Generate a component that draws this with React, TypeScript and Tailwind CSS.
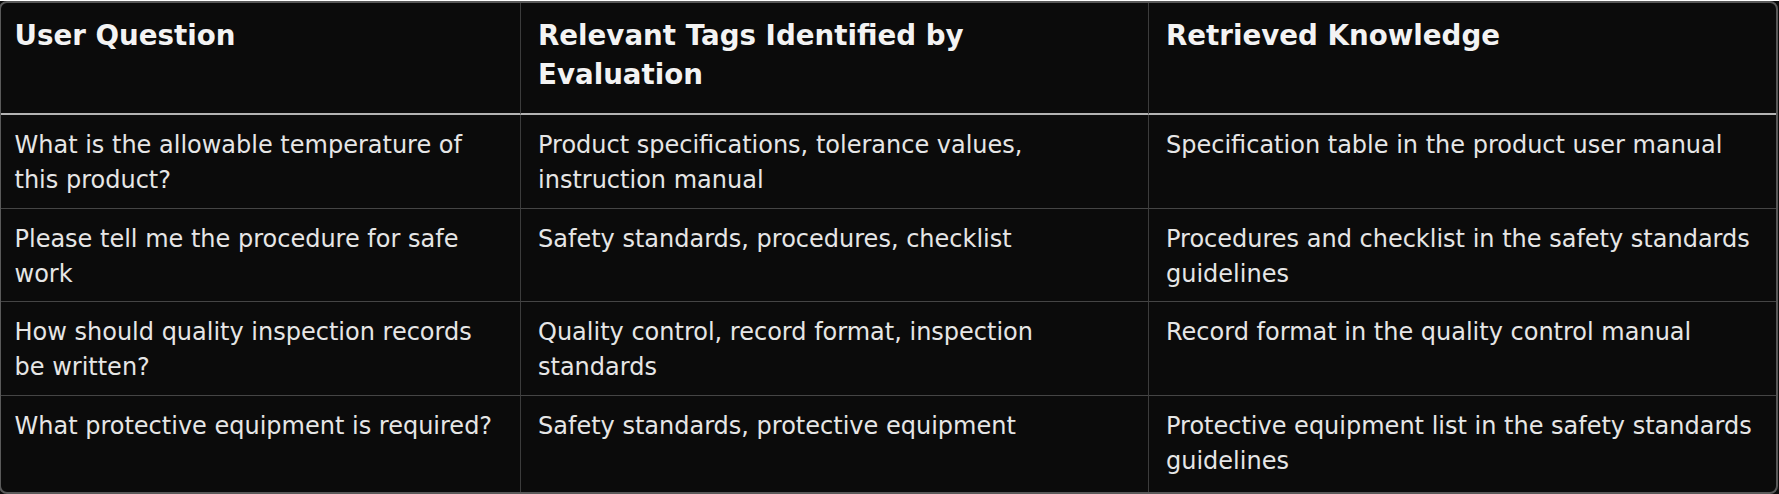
const rows = [
  {
    question: 'What is the allowable temperature of this product?',
    tags: 'Product specifications, tolerance values, instruction manual',
    knowledge: 'Specification table in the product user manual',
  },
  {
    question: 'Please tell me the procedure for safe work',
    tags: 'Safety standards, procedures, checklist',
    knowledge: 'Procedures and checklist in the safety standards guidelines',
  },
  {
    question: 'How should quality inspection records be written?',
    tags: 'Quality control, record format, inspection standards',
    knowledge: 'Record format in the quality control manual',
  },
  {
    question: 'What protective equipment is required?',
    tags: 'Safety standards, protective equipment',
    knowledge: 'Protective equipment list in the safety standards guidelines',
  },
]

const headers = ['User Question', 'Relevant Tags Identified by Evaluation', 'Retrieved Knowledge']

export default function App() {
  return (
    <div className="min-h-screen bg-[#0b0b0b] font-['DejaVu_Sans',sans-serif]">
      <div className="-ml-px mt-px w-[1779px] overflow-hidden rounded-lg border-2 border-[#5a5a5a] bg-[#0b0b0b]">
        <div className="grid grid-cols-[520px_628px_1fr]">
          {headers.map((h, i) => (
            <div
              key={h}
              className={`border-b-2 border-b-[#b4b4b4] pt-[12.5px] pb-[19.5px] pr-[18px] text-[27.7px] font-bold leading-[39px] text-[#f3f3f3] ${
                i === 0 ? 'pl-[13.5px]' : 'pl-[17px]'
              } ${i < 2 ? 'border-r border-r-[#3c3c3c]' : ''}`}
            >
              {h}
            </div>
          ))}

          {rows.map((row, r) => {
            const last = r === rows.length - 1
            const cells = [row.question, row.tags, row.knowledge]
            return cells.map((text, i) => (
              <div
                key={`${r}-${i}`}
                className={`pt-[13px] pr-[16px] text-[24px] leading-[35px] text-[#e6e6e6] ${
                  last ? 'pb-[13px]' : 'pb-[9.5px] border-b border-b-[#454545]'
                } ${i === 0 ? 'pl-[13.5px]' : 'pl-[17px]'} ${i < 2 ? 'border-r border-r-[#3c3c3c]' : ''}`}
              >
                {text}
              </div>
            ))
          })}
        </div>
      </div>
    </div>
  )
}
